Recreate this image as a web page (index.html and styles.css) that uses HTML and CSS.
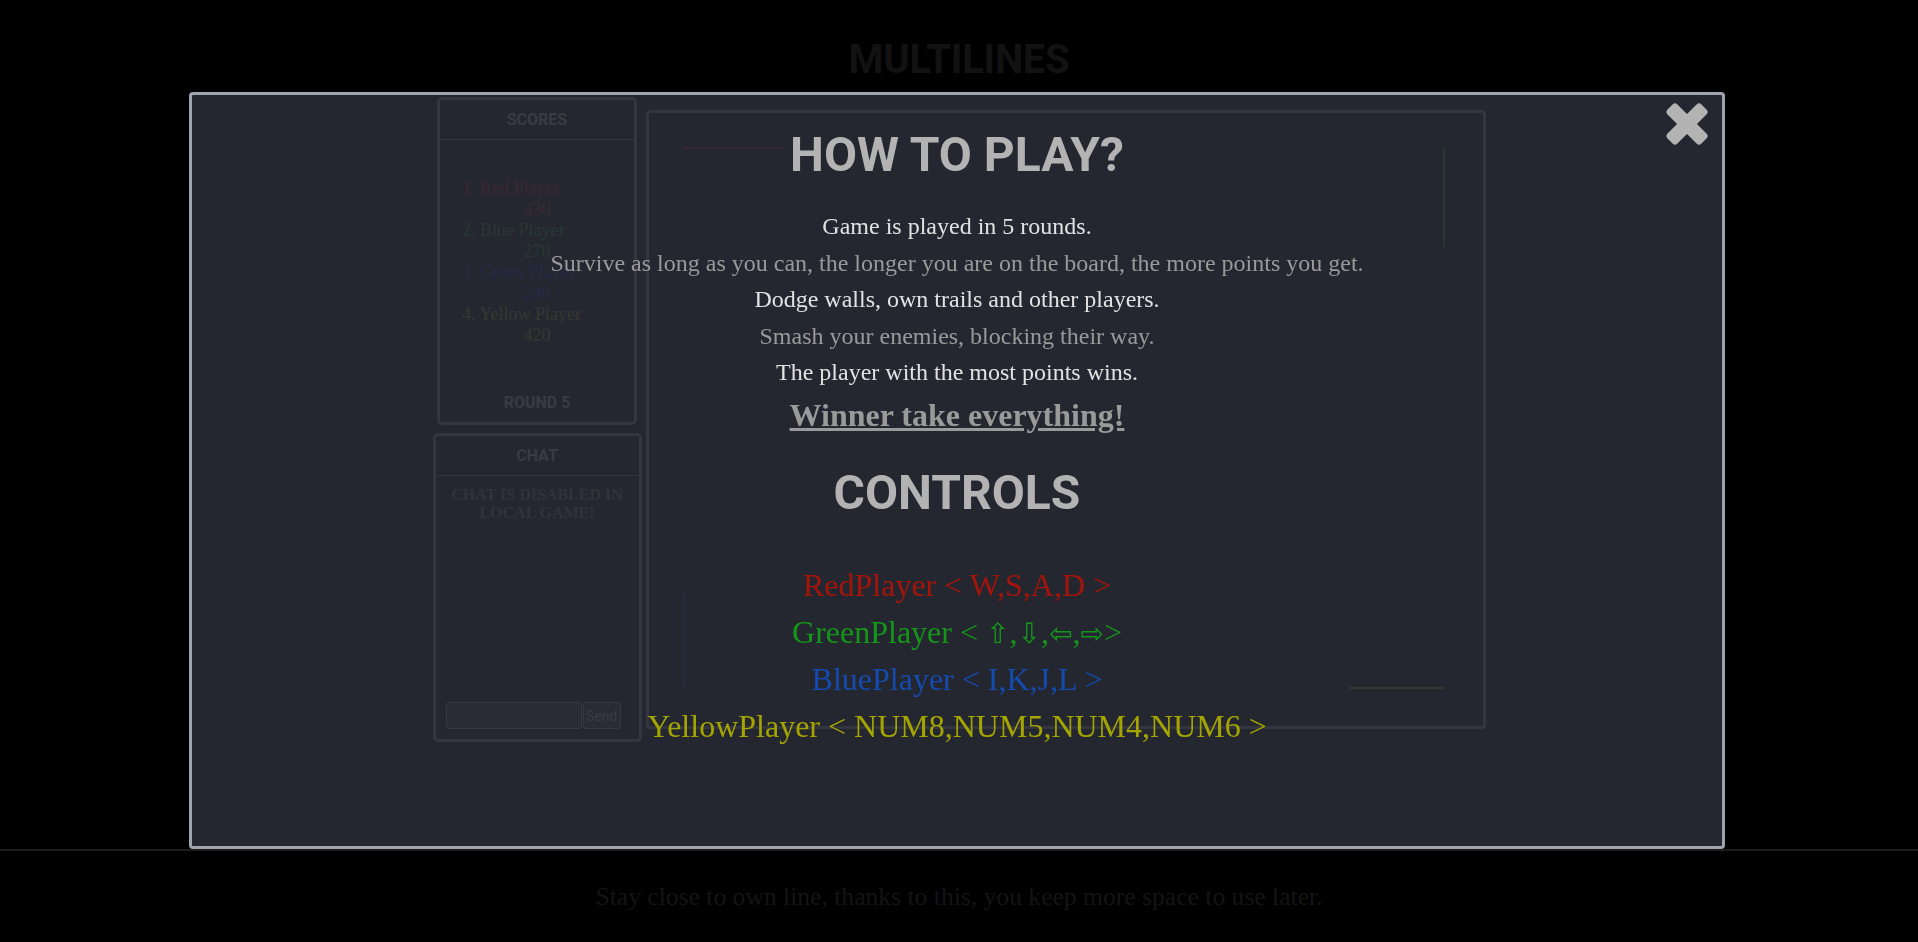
FILE: index.html
```html
<!DOCTYPE html>
<html lang="en">
<head>
<meta charset="utf-8">
<title>Multilines</title>
<link rel="stylesheet" href="styles.css">
</head>
<body>
<header class="site-header">
  <h1 class="site-title">MULTILINES</h1>
</header>

<main class="game">
  <aside class="side">
    <section class="panel scores">
      <div class="panel-head">SCORES</div>
      <div class="score-body">
        <ol class="score-list">
          <li class="score score-red"><div class="score-name">1. Red Player</div><div class="score-pts">430</div></li>
          <li class="score score-green"><div class="score-name">2. Blue Player</div><div class="score-pts">270</div></li>
          <li class="score score-blue"><div class="score-name">3. Green Player</div><div class="score-pts">240</div></li>
          <li class="score score-yellow"><div class="score-name">4. Yellow Player</div><div class="score-pts">420</div></li>
        </ol>
      </div>
      <div class="panel-foot">ROUND 5</div>
    </section>
    <section class="panel chat">
      <div class="panel-head">CHAT</div>
      <div class="chat-body">
        <p class="chat-note">CHAT IS DISABLED IN LOCAL GAME!</p>
      </div>
      <form class="chat-form">
        <input class="chat-input" type="text">
        <button class="chat-send" type="button">Send</button>
      </form>
    </section>
  </aside>
  <div class="board">
    <svg class="board-svg" width="834" height="613" viewBox="0 0 834 613">
      <line x1="35" y1="35" x2="133" y2="35" stroke="#5a0000" stroke-width="2"/>
      <line x1="795" y1="35" x2="795" y2="134" stroke="#005a08" stroke-width="2"/>
      <line x1="35" y1="480" x2="35" y2="574" stroke="#00146a" stroke-width="2"/>
      <line x1="700" y1="575" x2="795" y2="575" stroke="#5a5000" stroke-width="2"/>
    </svg>
  </div>
</main>

<footer class="site-footer">
  <p class="tip">Stay close to own line, thanks to this, you keep more space to use later.</p>
</footer>

<div class="modal">
  <button class="modal-close" type="button" aria-label="Close">
    <svg width="44" height="44" viewBox="0 0 44 44">
      <rect x="-2" y="15" width="48" height="14" rx="3.5" fill="#b3b3b3" transform="rotate(45 22 22)"/>
      <rect x="-2" y="15" width="48" height="14" rx="3.5" fill="#b3b3b3" transform="rotate(-45 22 22)"/>
    </svg>
  </button>
  <h2 class="modal-title">HOW TO PLAY?</h2>
  <p class="rule rule-light">Game is played in 5 rounds.</p>
  <p class="rule rule-dim">Survive as long as you can, the longer you are on the board, the more points you get.</p>
  <p class="rule rule-light">Dodge walls, own trails and other players.</p>
  <p class="rule rule-dim">Smash your enemies, blocking their way.</p>
  <p class="rule rule-light">The player with the most points wins.</p>
  <p class="motto">Winner take everything!</p>
  <h2 class="modal-title controls-title">CONTROLS</h2>
  <ul class="controls">
    <li class="ctrl ctrl-red">RedPlayer &lt; W,S,A,D &gt;</li>
    <li class="ctrl ctrl-green">GreenPlayer &lt; <span class="arrow">⇧</span>,<span class="arrow">⇩</span>,<span class="arrow">⇦</span>,<span class="arrow">⇨</span>&gt;</li>
    <li class="ctrl ctrl-blue">BluePlayer &lt; I,K,J,L &gt;</li>
    <li class="ctrl ctrl-yellow">YellowPlayer &lt; NUM8,NUM5,NUM4,NUM6 &gt;</li>
  </ul>
</div>
</body>
</html>
```

FILE: styles.css
```css
* { box-sizing: border-box; }

html, body {
  margin: 0;
  padding: 0;
  background: #000;
}

body {
  font-family: "Liberation Serif", "DejaVu Serif", serif;
  width: 1918px;
  height: 942px;
  overflow: hidden;
}

/* ---------- page header ---------- */
.site-header {
  padding: 36px 0 14px;
  text-align: center;
}
.site-title {
  margin: 0;
  font-family: Roboto, "Liberation Sans", sans-serif;
  font-weight: 700;
  font-size: 40px;
  letter-spacing: -0.3px;
  line-height: normal;
  color: #121212;
}

/* ---------- game layout ---------- */
.game {
  display: flex;
  justify-content: center;
  align-items: center;
  gap: 4px;
}

.side {
  width: 209px;
  display: flex;
  flex-direction: column;
  align-items: center;
  gap: 8px;
}

.panel {
  border: 3px solid #4b4c4e;
  border-radius: 5px;
  display: flex;
  flex-direction: column;
}

.panel-head,
.panel-foot {
  font-family: Roboto, "Liberation Sans", sans-serif;
  font-weight: 700;
  font-size: 16px;
  line-height: normal;
  color: #646460;
  text-align: center;
  padding: 10px 0;
}
.panel-head {
  border-bottom: 1px solid #4b4c4e;
}

.scores {
  width: 200px;
  height: 328px;
}
.score-body {
  flex: 1;
  display: flex;
  flex-direction: column;
  justify-content: center;
}
.score-list {
  list-style: none;
  margin: 0;
  padding: 0;
  font-size: 18px;
  line-height: 21px;
}
.score-name {
  padding-left: 22px;
}
.score-pts {
  text-align: center;
}
.score-red { color: #6c0000; }
.score-green { color: #005a00; }
.score-blue { color: #001070; }
.score-yellow { color: #5a5000; }

.chat {
  width: 209px;
  height: 309px;
}
.chat-body {
  flex: 1;
  padding: 10px 10px 0;
}
.chat-note {
  margin: 0;
  font-weight: 700;
  font-size: 16px;
  line-height: 18px;
  text-align: center;
  color: #3c3c37;
}
.chat-form {
  display: flex;
  padding: 0 0 10px 10px;
}
.chat-input {
  width: 136px;
  height: 27px;
  margin: 0;
  border: 1px solid #5a5a55;
  border-radius: 3px;
  background: #14151a;
}
.chat-send {
  width: 38px;
  height: 27px;
  margin: 0 0 0 1px;
  padding: 0;
  border: 1px solid #5a5a55;
  border-radius: 3px;
  background: #14151a;
  font-family: Roboto, "Liberation Sans", sans-serif;
  font-size: 14px;
  color: #646460;
}

.board {
  width: 840px;
  height: 619px;
  border: 3px solid #4b4c4e;
  border-radius: 4px;
}
.board-svg {
  display: block;
}

/* ---------- footer ---------- */
.site-footer {
  margin-top: 107px;
  border-top: 2px solid #1c1c1c;
  padding-top: 31px;
  text-align: center;
}
.tip {
  margin: 0;
  font-size: 25.6px;
  color: #141414;
}

/* ---------- modal ---------- */
.modal {
  position: fixed;
  left: 189px;
  top: 92px;
  width: 1536px;
  height: 757px;
  border: 3px solid #a0a4ae;
  border-radius: 4px;
  background: rgba(46, 49, 60, 0.8);
  padding-top: 31px;
  text-align: center;
  z-index: 10;
}

.modal-close {
  position: absolute;
  top: 7px;
  right: 13px;
  width: 44px;
  height: 44px;
  padding: 0;
  border: 0;
  background: none;
}
.modal-close svg { display: block; }

.modal-title {
  margin: 0 0 30px;
  font-family: Roboto, "Liberation Sans", sans-serif;
  font-weight: 700;
  font-size: 48px;
  line-height: normal;
  color: #b3b3b3;
}

.rule {
  margin: 9.5px 0;
  font-size: 24px;
  line-height: normal;
}
.rule-light { color: #e2e2e2; }
.rule-dim { color: #9a9a9a; }

.motto {
  margin: 11px 0 30px;
  font-size: 32px;
  font-weight: 700;
  line-height: normal;
  color: #9a9a9a;
  text-decoration: underline;
}

.controls-title {
  margin-bottom: 46px;
}

.controls {
  list-style: none;
  margin: 0;
  padding: 0;
  display: flex;
  flex-direction: column;
  gap: 10px;
}
.ctrl {
  font-family: "Liberation Serif", "DejaVu Sans", serif;
  font-size: 32px;
  line-height: 37px;
}
.arrow {
  font-family: "DejaVu Sans", sans-serif;
  font-size: 28px;
  line-height: 1;
}
.ctrl-red { color: #a5140a; }
.ctrl-green { color: #149619; }
.ctrl-blue { color: #144baf; }
.ctrl-yellow { color: #a5a500; }
```
